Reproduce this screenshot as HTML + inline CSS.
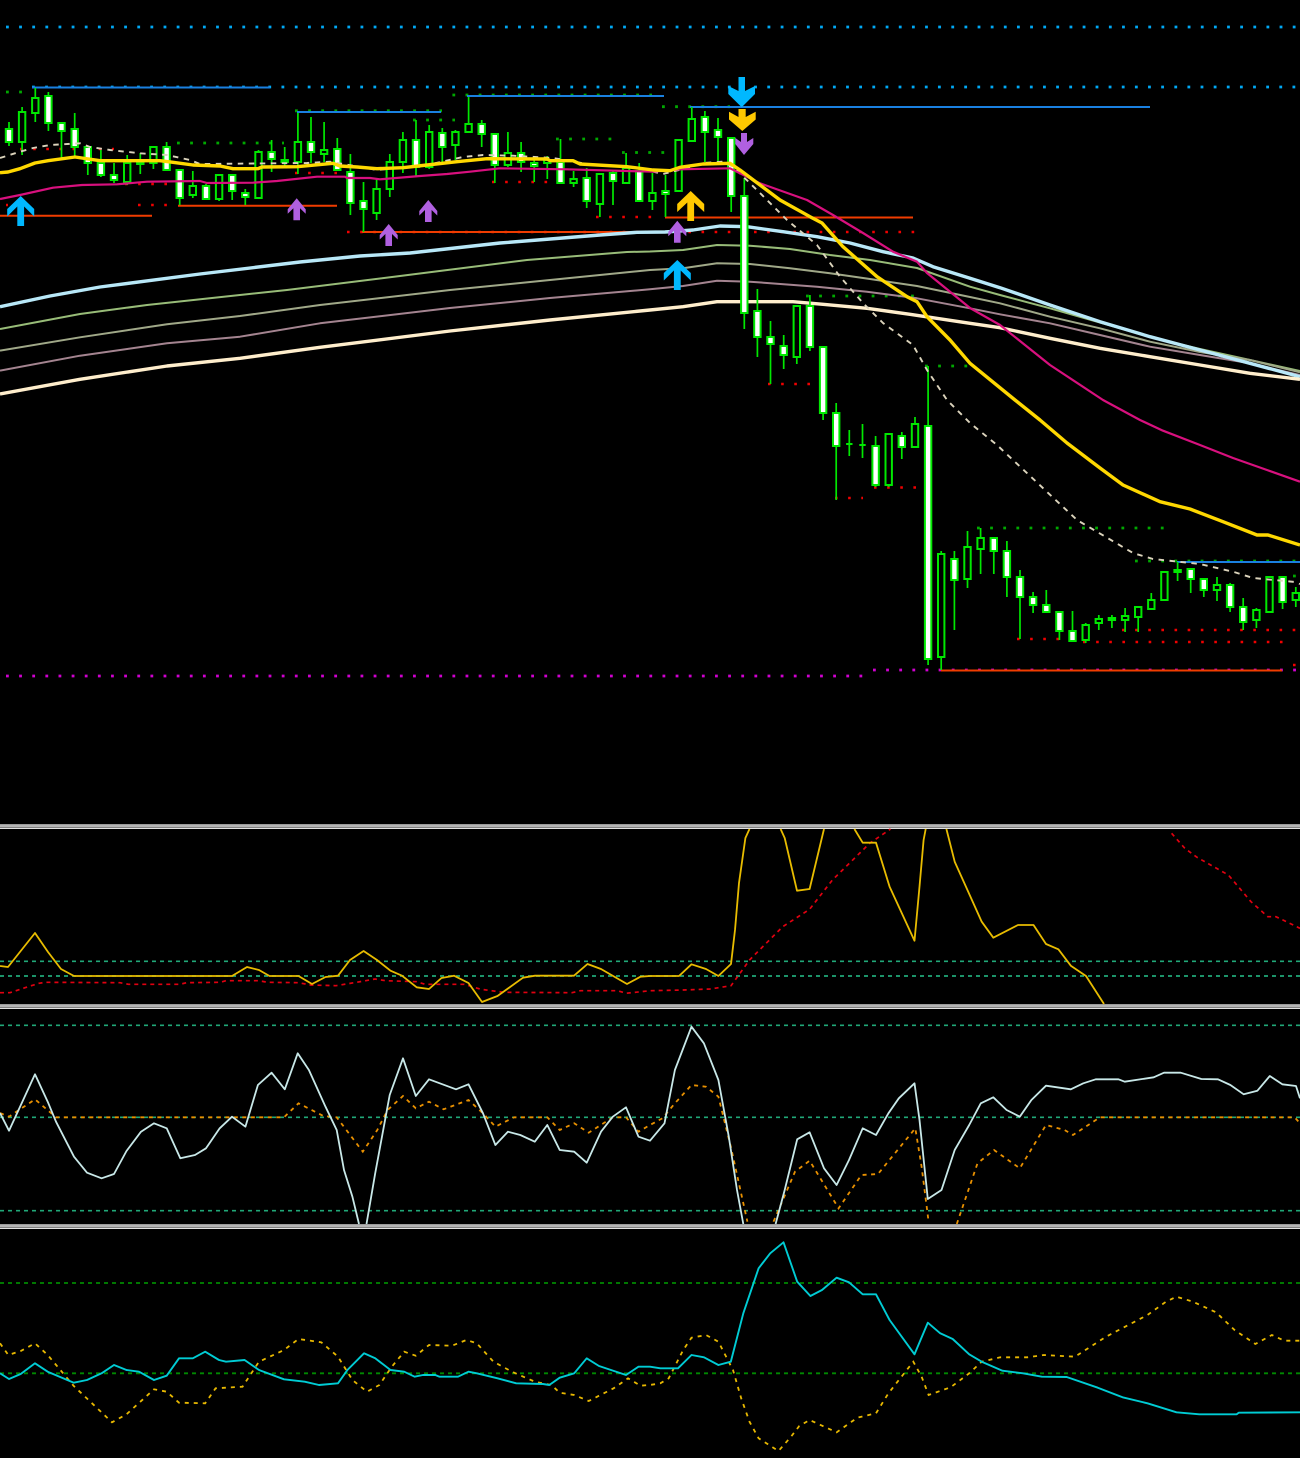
<!DOCTYPE html>
<html><head><meta charset="utf-8"><title>Chart</title>
<style>html,body{margin:0;padding:0;background:#000}svg{display:block}</style></head>
<body>
<svg xmlns="http://www.w3.org/2000/svg" width="1300" height="1458" viewBox="0 0 1300 1458" fill="none">
<rect width="1300" height="1458" fill="#000"/>
<!-- blue dots -->
<path stroke="#00a8f4" stroke-width="2.8" stroke-dasharray="2.8 10.33" d="M6 27H1300M32 87H1300"/>
<!-- magenta dots -->
<path stroke="#d000d0" stroke-width="2.8" stroke-dasharray="2.8 10.33" d="M6 676H863M873 670H1298"/>
<!-- green dots -->
<path stroke="#00a800" stroke-width="2.8" stroke-dasharray="2.8 10.33" d="M6 92H22M177 143H284M295 110.8H442M413 120H455M452.4 95H652M662 106.7H730M556 139H613M622 152.5H665M806 296H915M925 366H970M977 528H1165M1135 561H1300M1293 576H1296"/>
<!-- red dots -->
<path stroke="#f00000" stroke-width="2.6" stroke-dasharray="2.6 10.53" d="M20 149H114M125 184H167M6 205H8M138 205H167M295 173H350M347 232H915M492 182H586M596 217H653M768 384H823M874 487.5H928M835 498H863M1122 630H1297M1083 642H1283M1017 639H1073M1293 665H1296"/>
<!-- support / resistance lines -->
<path stroke="#1a80e0" stroke-width="2" d="M32 87.5H270M297 112H441M467 96H664M690 107H1150M1177 562H1300"/>
<path stroke="#f03c00" stroke-width="2" d="M0 215.7H152M178 205.7H337M362 232H665M665 217.5H913M941 670.5H1282"/>
<!-- long MAs -->
<g stroke-linejoin="round">
<path stroke="#98bc78" stroke-width="2" d="M0 329L80 314L147 305L287 290L400 276L527 260L627 252L650 251.5L683 250L717 245L750 245.7L790 249L830 255L870 260L917 268L970 286.7L1000 295L1050 308.3L1100 322.5L1150 337L1200 349L1250 360L1300 371"/>
<path stroke="#a0a888" stroke-width="2" d="M0 350.7L80 337.3L167 324.3L240 316L320 305L450 290L550 280L650 270L683 268.3L717 263.3L750 264L790 268.3L830 273.3L870 279L917 286L970 297L1000 303.3L1050 316.7L1100 328.3L1150 341.7L1200 352L1250 360L1300 372.3"/>
<path stroke="#a48490" stroke-width="2" d="M0 370.7L80 355.7L167 343.3L240 336.7L320 323.3L450 308L550 298L650 289.3L683 286L717 280.7L750 281.7L817 286.7L867 291.7L917 298.3L970 308.3L1000 314.3L1050 323.3L1100 335L1150 346.7L1200 355L1250 363.3L1300 375"/>
<path stroke="#b8e8f8" stroke-width="3.4" d="M0 306.7L50 296L100 287L200 274L300 262L360 256L410 253L500 243L600 235L637 232.3L665 232L693 230L720 226L747 226.7L783 231.7L817 236.7L850 243L883 251.7L913 258L933 266.7L970 278.3L1000 287.7L1050 305L1100 321.7L1150 336.7L1200 350L1250 363.3L1300 376.7"/>
<path stroke="#ffeecc" stroke-width="3.4" d="M0 394L80 379.3L167 366L240 358.3L320 347.3L450 331L550 320L650 310L683 306.7L717 301.7L793 301.7L823 304.3L867 308.3L910 314.3L970 323.3L1000 327.7L1050 338.3L1100 348.3L1150 356.7L1200 365L1250 373.3L1300 379.3"/>
</g>
<!-- wicks -->
<path stroke="#00e800" stroke-width="1.7" d="M9 122V146M22.1 107V155M35.3 88V122M48.4 92V131M61.5 123V158M74.7 113V157M87.8 147V175M100.9 150V177M114 163V183M127.2 155V185M140.3 153V174M153.4 147V169M166.6 142V171M179.7 170V205M192.8 171V198M206 184V200M219.1 174V201M232.2 174V200M245.3 189V205M258.5 150V198M271.6 140V172M284.7 147V167M297.9 113V174M311 117V163M324.1 122V162M337.3 138V171M350.4 154V215M363.5 182V232M376.6 178V220M389.8 154V197M402.9 132V173M416 120V176M429.2 125V169M442.3 128V163M455.4 130V160M468.6 97V132M481.7 120V147M494.8 133V183M507.9 132V167M521.1 142V172M534.2 157V182M547.3 156V179M560.5 139V183M573.6 171V187M586.7 168V208M599.9 173V217M613 170V205M626.1 153V183M639.2 163V201M652.4 173V210M665.5 175V217M678.6 140V191M691.8 107V141M704.9 111V162M718 118V163M731.2 138V212M744.3 178V329M757.4 289V357M770.5 321V384M783.7 335V369M796.8 306V364M809.9 295V351M823.1 347V420M836.2 403V500M849.3 430V456M862.5 424V458M875.6 436V487M888.7 434V487M901.8 432V459M915 417V447M928.1 366V665M941.2 551V670M954.4 551V630M967.5 531V588M980.6 528V574M993.8 538V574M1006.9 541V597M1020 570V639M1033.1 592V613M1046.3 590V612M1059.4 612V640M1072.5 611V641M1085.7 623V643M1098.8 615V630M1111.9 615V628M1125.1 608V632M1138.2 607V632M1151.3 593V609M1164.4 572V600M1177.6 562V581M1190.7 569V593M1203.8 578V597M1217 577V601M1230.1 583V612M1243.2 598V630M1256.4 608V628M1269.5 577V613M1282.6 576V609M1295.8 587V607"/>
<!-- hollow bodies -->
<path fill="#000" stroke="#00e800" stroke-width="2" d="M18.9 112h6.4v30h-6.4zM32.1 98h6.4v15h-6.4zM124 163h6.4v19h-6.4zM150.2 147h6.4v16h-6.4zM189.6 186h6.4v9h-6.4zM215.9 175h6.4v24h-6.4zM255.3 152h6.4v46h-6.4zM294.7 142h6.4v20h-6.4zM320.9 150h6.4v4h-6.4zM373.4 189h6.4v24h-6.4zM386.6 162h6.4v27h-6.4zM399.7 140h6.4v22h-6.4zM426 132h6.4v35h-6.4zM452.2 132h6.4v13h-6.4zM465.4 124h6.4v8h-6.4zM504.7 153h6.4v12h-6.4zM544.1 160h6.4v3h-6.4zM570.4 179h6.4v4h-6.4zM596.7 174h6.4v30h-6.4zM622.9 168h6.4v15h-6.4zM649.2 193h6.4v8h-6.4zM675.4 140h6.4v51h-6.4zM688.6 119h6.4v22h-6.4zM793.6 306h6.4v51h-6.4zM885.5 434h6.4v51h-6.4zM911.8 424h6.4v23h-6.4zM938 554h6.4v103h-6.4zM964.3 547h6.4v32h-6.4zM977.4 538h6.4v11h-6.4zM1082.5 625h6.4v15h-6.4zM1095.6 619h6.4v4h-6.4zM1121.9 616h6.4v4h-6.4zM1135 607h6.4v10h-6.4zM1148.1 600h6.4v9h-6.4zM1161.2 572h6.4v28h-6.4zM1213.8 585h6.4v5h-6.4zM1253.2 610h6.4v10h-6.4zM1266.3 577h6.4v35h-6.4zM1292.6 593h6.4v7h-6.4z"/>
<!-- filled bodies -->
<path fill="#fff" stroke="#00e800" stroke-width="2" d="M5.8 129h6.4v13h-6.4zM45.2 96h6.4v27h-6.4zM58.3 123h6.4v8h-6.4zM71.5 129h6.4v18h-6.4zM84.6 147h6.4v16h-6.4zM97.7 163h6.4v12h-6.4zM110.8 175h6.4v5h-6.4zM137.1 162h6.4v2h-6.4zM163.4 147h6.4v23h-6.4zM176.5 170h6.4v28h-6.4zM202.8 186h6.4v13h-6.4zM229 175h6.4v16h-6.4zM242.1 193h6.4v4h-6.4zM268.4 152h6.4v7h-6.4zM281.5 160h6.4v2h-6.4zM307.8 142h6.4v10h-6.4zM334.1 149h6.4v21h-6.4zM347.2 172h6.4v31h-6.4zM360.3 201h6.4v8h-6.4zM412.8 140h6.4v27h-6.4zM439.1 133h6.4v14h-6.4zM478.5 124h6.4v10h-6.4zM491.6 134h6.4v31h-6.4zM517.9 153h6.4v9h-6.4zM531 163h6.4v3h-6.4zM557.3 162h6.4v21h-6.4zM583.5 178h6.4v23h-6.4zM609.8 173h6.4v8h-6.4zM636 171h6.4v30h-6.4zM662.3 191h6.4v3h-6.4zM701.7 117h6.4v15h-6.4zM714.8 130h6.4v7h-6.4zM728 138h6.4v58h-6.4zM741.1 196h6.4v117h-6.4zM754.2 311h6.4v26h-6.4zM767.3 337h6.4v7h-6.4zM780.5 346h6.4v9h-6.4zM806.7 306h6.4v41h-6.4zM819.9 347h6.4v66h-6.4zM833 413h6.4v33h-6.4zM846.1 444h6.4v0h-6.4zM859.3 445h6.4v0h-6.4zM872.4 446h6.4v39h-6.4zM898.6 436h6.4v11h-6.4zM924.9 426h6.4v233h-6.4zM951.2 559h6.4v21h-6.4zM990.6 538h6.4v13h-6.4zM1003.7 551h6.4v26h-6.4zM1016.8 577h6.4v20h-6.4zM1029.9 597h6.4v8h-6.4zM1043.1 605h6.4v7h-6.4zM1056.2 612h6.4v19h-6.4zM1069.3 631h6.4v10h-6.4zM1108.7 618h6.4v2h-6.4zM1174.4 570h6.4v2h-6.4zM1187.5 569h6.4v10h-6.4zM1200.6 579h6.4v11h-6.4zM1226.9 585h6.4v22h-6.4zM1240 607h6.4v15h-6.4zM1279.4 577h6.4v25h-6.4z"/>
<!-- short MAs -->
<g stroke-linejoin="round">
<path stroke="#dcd4bc" stroke-width="1.9" stroke-dasharray="5.5 5.5" d="M0 158L20 151.7L33 148L50 145L80 143.3L90 147L110 150L140 153.3L167 155L190 160L200 164L307 163L330 161.7L377 170L427 165L463 157L483 155L513 155.7L553 158L593 165L637 168L663 174L683 169L703 163L722 161.7L733 166.7L760 193L787 220L817 245L840 276.7L863 303L883 323L913 345L927 370L947 400L970 423L997 445L1077 520L1133 553L1153 559L1200 564L1233 571.7L1253 578L1295 582L1300 584"/>
<path stroke="#d8107e" stroke-width="2.2" d="M0 199L20 195L53 187.7L82 185L117 184.3L147 181.7L200 181L207 183L253 182.7L277 181L317 176.7L345 176.7L347 178L370 178L380 179.3L420 176L447 174L470 171.7L500 168.3L567 169.3L653 171.7L680 169.3L730 168.3L760 183.3L807 200L833 215L863 233L893 251.7L917 261.7L927 273L970 308L1000 325L1050 365L1103 400L1140 420L1163 430.7L1200 445L1233 458L1267 470L1300 481.7"/>
<path stroke="#ffd800" stroke-width="3.4" d="M0 172.7L8 172L20 168.7L35 163L48 160.7L75 157L100 160.7L160 160.7L173 162.3L193 165L220 166L233 168.7L258 168.7L262 167L297 166.7L333 163.3L340 166L357 167L377 168.7L403 167.7L427 165L457 161.7L487 158.7L547 159L550 160.7L573 160.7L580 164L627 166.7L653 170L670 170.7L680 167.3L703 164L730 163.3L740 170L760 185L780 200L810 216.7L822 223L843 246.7L877 276.7L907 296.7L917 301.7L927 316.7L950 340L970 363.3L1015 400L1040 420L1067 443L1100 468L1123 485L1160 501.7L1190 509L1223 521.7L1257 535L1268 535L1300 545"/>
</g>
<!-- arrows -->
<g>
<path fill="#00b8ff" transform="translate(20.7 196)" d="M0 0L13.5 13V20.5L3.4 10.5V30H-3.4V10.5L-13.5 20.5V13Z"/>
<path fill="#00b8ff" transform="translate(677.3 260)" d="M0 0L13.5 13V20.5L3.4 10.5V30H-3.4V10.5L-13.5 20.5V13Z"/>
<path fill="#ffc800" transform="translate(690.7 191)" d="M0 0L13.5 13V21L3.4 11.5V30H-3.4V11.5L-13.5 21V13Z"/>
<path fill="#b060e0" transform="translate(296.7 198.3)" d="M0 0L9 11V15.5L3.3 10V22H-3.3V10L-9 15.5V11Z"/>
<path fill="#b060e0" transform="translate(428.3 200)" d="M0 0L9 11V15.5L3.3 10V22H-3.3V10L-9 15.5V11Z"/>
<path fill="#b060e0" transform="translate(388.7 224)" d="M0 0L9 11V15.5L3.3 10V22H-3.3V10L-9 15.5V11Z"/>
<path fill="#b060e0" transform="translate(677.3 220.7)" d="M0 0L9 11V15.5L3.3 10V22H-3.3V10L-9 15.5V11Z"/>
<path fill="#00b8ff" d="M738.5 77H745V91L755 86V94L741.7 107.3L728.3 94V86L738.5 91Z"/>
<path fill="#ffc800" d="M738.5 109H745.7V117L755.7 111.7V119.5L742.3 131L729 119.5V111.7L738.5 117Z"/>
<path fill="#b060e0" d="M741 133H747V142L753.3 138V144L744 155L735.3 144V138L741 142Z"/>
</g>
<!-- separators -->
<path stroke="#9a9a9a" stroke-width="1" d="M0 824.5H1300M0 1004.5H1300M0 1224.5H1300"/>
<path stroke="#f0f0f0" stroke-width="1.5" d="M0 826H1300M0 1006H1300M0 1226H1300"/>
<path stroke="#808080" stroke-width="1" d="M0 827.5H1300M0 1007.5H1300M0 1227.5H1300"/>
<path stroke="#e0e0e0" stroke-width="1" d="M0 828.5H1300M0 1008.5H1300M0 1228.5H1300"/>
<!-- panel 1 -->
<path stroke="#20a878" stroke-width="1.7" stroke-dasharray="4 4" d="M0 961.3H1300M0 976H1300"/>
<path stroke="#e00010" stroke-width="1.7" stroke-dasharray="4 4" d="M0 992.7L10 992.7L25 987.7L39 983.3L45.6 982.3L120 982.7L128.5 984.3L180 984.3L186.6 982.7L220 982.3L226 980.7L259 980.7L267.4 982.3L298.5 982.7L311 985L336 985.7L356.6 982.3L375 979L385.6 980.7L416.7 981.7L425 984.3L464.3 984.3L481 989.3L503.7 992.3L572 992.7L580.4 990.7L617.8 990.7L626 993.3L650 990.7L683 990L710 989L731 985.7L749.5 960L782.7 926.7L809.6 909.3L832.4 880L869.7 843.3L890.5 829M1171.6 833.3L1184.8 848.3L1197 857.3L1228.4 875L1251 901.7L1267.8 916.7L1276 916.7L1300 928.3"/>
<path stroke="#e8bc00" stroke-width="1.8" stroke-linejoin="round" d="M0 966L8 967L35 933L48 952L61 969L74 976L232 976L247 967L259 970L269.5 976L298.5 976L312 984L325.5 977L338 975.7L350 960L363.6 951L377 960L390.5 970.7L402 975.7L416.7 987.3L429 989L441.5 978L454 975.7L468.5 983L482 1002L497.5 996L523 977.7L535 975.7L574 975.7L587.5 964L601 969L627 984L640.5 976.7L650 976L679 976L691.5 964.3L706 969L718.4 976L731 964L735 930L739 883L745.4 838L749.5 829M780.6 829L784.7 838L797 890.7L809.6 889L824 829M854.4 829L862.7 842.7L876 842.7L889.6 886.7L914.5 940.7L919.5 886.7L923.6 840L925.7 829M946.4 829L954.7 861.7L981.7 921.7L993.3 937.7L1018 925L1033.5 925L1046 944L1058.4 949.3L1070.8 965.7L1086 976L1104 1004"/>
<!-- panel 2 -->
<path stroke="#20a878" stroke-width="1.7" stroke-dasharray="4 4" d="M0 1025.3H1300M0 1117.3H1300M0 1210.7H1300"/>
<path stroke="#e89000" stroke-width="1.8" stroke-dasharray="4 4.5" d="M0 1113L9 1116.7L35 1099.3L56 1117.3L284 1117.3L298.5 1103.3L323.4 1116L336.7 1117.3L362.8 1151.7L377.3 1130L387.6 1110L403 1096L415.8 1108.3L429 1101.7L443.6 1109.3L468.5 1100L483 1113.3L495.4 1126.7L514 1117.3L547.3 1117.3L559.7 1130L574.2 1123.3L588.7 1132.7L612.8 1117.3L626 1117.3L638.5 1131.7L650 1125L662.4 1118.3L674.9 1103.3L691.5 1085L706 1086.7L718.4 1096.7L730.8 1146.7L747.4 1221.7M773.5 1221.7L795 1171.7L809.6 1160.7L838.6 1208.3L861.4 1175L878 1174L915.3 1128.3L921.6 1166.7L928.6 1221.7M956.8 1224L977.5 1163.3L994 1150L1019.8 1168.3L1046 1125L1064.6 1130L1073 1135L1100 1117.3L1294.7 1117.3L1300 1123.3"/>
<path stroke="#c8e8e8" stroke-width="1.8" stroke-linejoin="round" d="M0 1113L9 1130.7L35 1074.3L47.7 1101.7L56 1121.7L74 1156.7L87 1172.7L101.6 1178.3L114 1174L126.5 1151L141 1131.7L154 1123.3L166.7 1128.3L180.3 1158.3L195 1155L206 1148.3L219.7 1128.3L232 1116.7L245.4 1126.7L257.9 1085L271.6 1072.7L284.8 1089.3L297.7 1053.3L308.9 1070L325.5 1106.7L336.7 1130L344 1170L352.4 1196.7L359 1224M366.5 1224L375.2 1173.3L389.7 1095L403 1058.3L415.8 1096L429 1079.3L456 1089.3L468.5 1084.3L483 1113.3L495.4 1145L507.9 1131.7L520.3 1135L534.8 1141.7L547.3 1125L559.7 1150L574.2 1151.7L586.7 1162.7L601 1131.7L612.8 1116.7L626 1107.3L638.5 1136.7L650 1140.7L664.5 1123.3L674.9 1070L691.5 1026.7L703.9 1043.3L718.4 1080L728.8 1136.7L737 1190L743.3 1224M775.6 1224L784.7 1190L797.2 1139.3L809.6 1132.3L824 1168.3L836.6 1185L849 1160L862.7 1128.3L876 1135L888.4 1113.3L898.8 1098.3L914.5 1083.3L919.5 1120L927.8 1199L941.5 1190L954.7 1150L969.2 1125L980.8 1103.3L993.3 1097.3L1006.6 1110L1019.8 1116.7L1031.4 1100L1046 1085.7L1070.8 1089.3L1083.3 1083.3L1095.7 1079.3L1118.5 1079.3L1124.7 1081.7L1153.7 1077.3L1164 1072.7L1180.7 1072.7L1201.4 1079L1218 1079.3L1230.4 1085L1243.7 1094.3L1257.4 1090.7L1269.8 1076L1282.3 1084.3L1296 1086L1300 1098.3"/>
<!-- panel 3 -->
<path stroke="#008800" stroke-width="1.8" stroke-dasharray="4 4" d="M0 1283H1300M0 1373.3H1300"/>
<path stroke="#e8b800" stroke-width="1.8" stroke-dasharray="4 5" d="M0 1343.3L8.3 1355L20.7 1351L35 1343.3L47.7 1355L73.8 1386L112 1422.3L126.5 1414.3L154 1389.3L166.7 1391.7L179 1402.7L205.2 1403.3L215.6 1388.3L242.5 1386.7L259 1361.7L284 1350L298.5 1339L321.3 1342.3L338 1356.7L352.4 1380L367 1391.7L379.4 1385L391.8 1366.7L404.2 1351.7L415.8 1355.7L429 1345L452 1345.7L466.4 1340L476.8 1343.3L493.4 1361.7L512 1371.7L534.8 1381.7L551.4 1385L559.7 1392.7L574.2 1395L588.7 1401L613.6 1388.3L628 1378.3L640.5 1385.7L650 1385L660.4 1383.3L668.7 1378.3L683.2 1350L691.5 1337.7L706 1335L718.4 1341.7L733 1370L741.2 1398.3L749.5 1421.7L758.6 1438.3L778.5 1451L791 1436.7L799.3 1426L809.6 1420L836.6 1432.3L857.3 1417.7L876 1413.3L888.4 1393.3L913.3 1361.7L921.6 1376.7L928.6 1395L950.6 1387.3L969.2 1373.3L981.7 1361.7L1000.3 1357.3L1027.3 1357.3L1043.9 1355L1075 1356.7L1106 1336.7L1147.5 1315L1166 1301.7L1176.5 1296.7L1193 1301.7L1216 1312.3L1234.6 1330L1255.3 1344L1271.9 1335L1284.3 1340.7L1300 1340.7"/>
<path stroke="#00ccd4" stroke-width="1.9" stroke-linejoin="round" d="M0 1373.3L9 1379L20.7 1374L35 1363.3L47.7 1371.7L73.8 1382.7L87 1380L101.6 1373.3L114 1365L126.5 1370L139 1371.7L154 1380L166.7 1375.7L179 1358.3L192.8 1358.3L205.2 1351.7L219 1360L226 1361.7L244.6 1360L259 1370L284 1379.3L304.7 1381.7L319 1385L338 1383.3L347.4 1370L364 1353.3L375.2 1358.3L390.5 1370L404.2 1371.7L414.6 1376.7L422.9 1375L435.3 1375L439.5 1376.7L458 1376.7L468.5 1371.7L476.8 1373.3L497.5 1378.3L516.2 1383.3L543 1384L549.3 1385L559.7 1377.7L574.2 1373.3L586.7 1358.3L599 1366L626 1375L638.5 1366.7L650 1366.7L660.4 1368.3L678 1368.3L691.5 1355L704 1357.3L718.4 1365L730.8 1361.7L743.3 1313.3L758.6 1268.3L770.2 1253.3L783.5 1242.3L797.2 1281.7L810.4 1296L822 1290L836.6 1277.7L849 1282.3L862.7 1294.3L876 1294.3L889.6 1320L914.5 1354.3L927.8 1322.7L940.2 1333.3L952.7 1339L969.2 1354.3L981.7 1361.7L1002.4 1370.7L1023 1373.3L1041.8 1376.7L1066.7 1377L1097.8 1387.7L1122.6 1397.3L1147.5 1403.3L1176.5 1412.3L1199.3 1414.3L1236.7 1414.3L1238.7 1412.7L1300 1412.3"/>
</svg>
</body></html>
